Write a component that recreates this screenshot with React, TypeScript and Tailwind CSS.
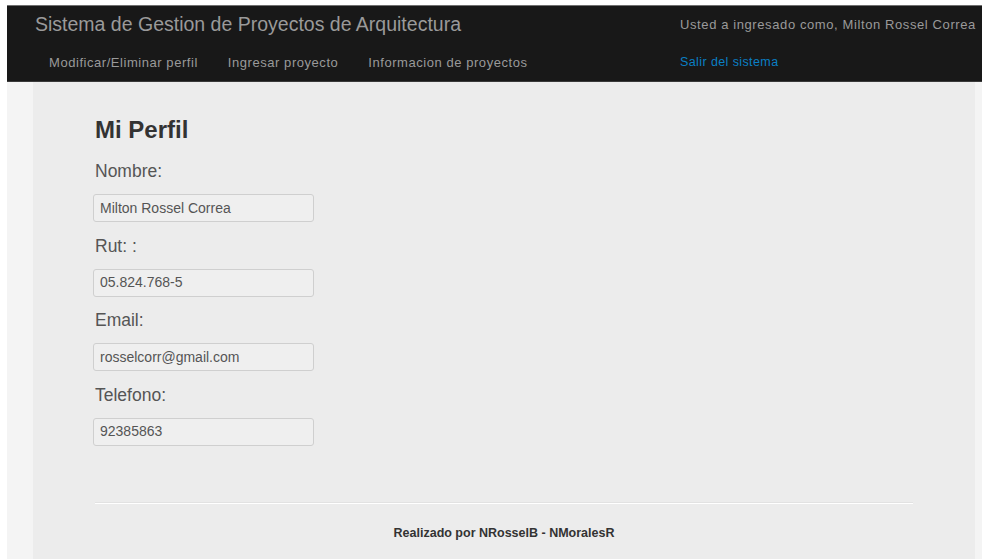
import React from 'react';

const font = { fontFamily: '"Liberation Sans", Arial, sans-serif' };

const fields = [
  { label: 'Nombre:', value: 'Milton Rossel Correa' },
  { label: 'Rut: :', value: '05.824.768-5' },
  { label: 'Email:', value: 'rosselcorr@gmail.com' },
  { label: 'Telefono:', value: '92385863' },
];

const links = ['Modificar/Eliminar perfil', 'Ingresar proyecto', 'Informacion de proyectos'];

function Navbar() {
  return (
    <header className="flex h-[77px] border-t border-b border-t-[#6f6f6f] border-b-[#3a3a3a] bg-[#181818]">
      <div className="flex flex-1 flex-col">
        <div className="flex h-[38px] items-center pl-[28px]">
          <span className="text-[19.5px] font-light text-[#9a9a9a]">
            Sistema de Gestion de Proyectos de Arquitectura
          </span>
        </div>
        <nav className="flex h-[38px] items-center pl-[27px]">
          {links.map((l) => (
            <a key={l} className="px-[15px] text-[13px] tracking-[0.55px] text-[#9a9a9a]">
              {l}
            </a>
          ))}
        </nav>
      </div>
      <div className="flex w-[302px] flex-col">
        <div className="flex h-[38px] items-center">
          <span className="whitespace-nowrap text-[13px] tracking-[0.6px] text-[#9a9a9a]">
            Usted a ingresado como, Milton Rossel Correa
          </span>
        </div>
        <div className="flex h-[38px] items-center">
          <a className="text-[12.5px] tracking-[0.4px] text-[#0a7fc4]">Salir del sistema</a>
        </div>
      </div>
    </header>
  );
}

export default function App() {
  return (
    <div className="h-[559px] overflow-hidden bg-white pl-[7px] pt-[5px]" style={font}>
      <div className="h-full bg-[#f4f4f4]">
        <Navbar />
        <main className="ml-[26px] mr-[7px] h-full bg-[#ececec] px-[62px] pt-[34px]">
          <h1 className="h-[28px] text-[24px] font-bold leading-[28px] text-[#333]">Mi Perfil</h1>
          <div className="mt-[16px]">
            {fields.map((f) => (
              <div key={f.label} className="pb-[12.5px]">
                <div className="mb-[12px] h-[22px] text-[17.5px] leading-[22px] text-[#555]">
                  {f.label}
                </div>
                <div className="-ml-[2px] flex h-[28px] w-[221px] items-center rounded-[3px] border border-[#cfcfcf] bg-[#efefef] px-[6px] text-[14px] text-[#555]">
                  {f.value}
                </div>
              </div>
            ))}
          </div>
          <hr className="mt-[44px] border-0 border-t border-t-[#e2e2e2] border-b border-b-white" />
          <p className="mt-[20px] text-center text-[12.5px] font-bold text-[#333]">
            Realizado por NRosselB - NMoralesR
          </p>
        </main>
      </div>
    </div>
  );
}
